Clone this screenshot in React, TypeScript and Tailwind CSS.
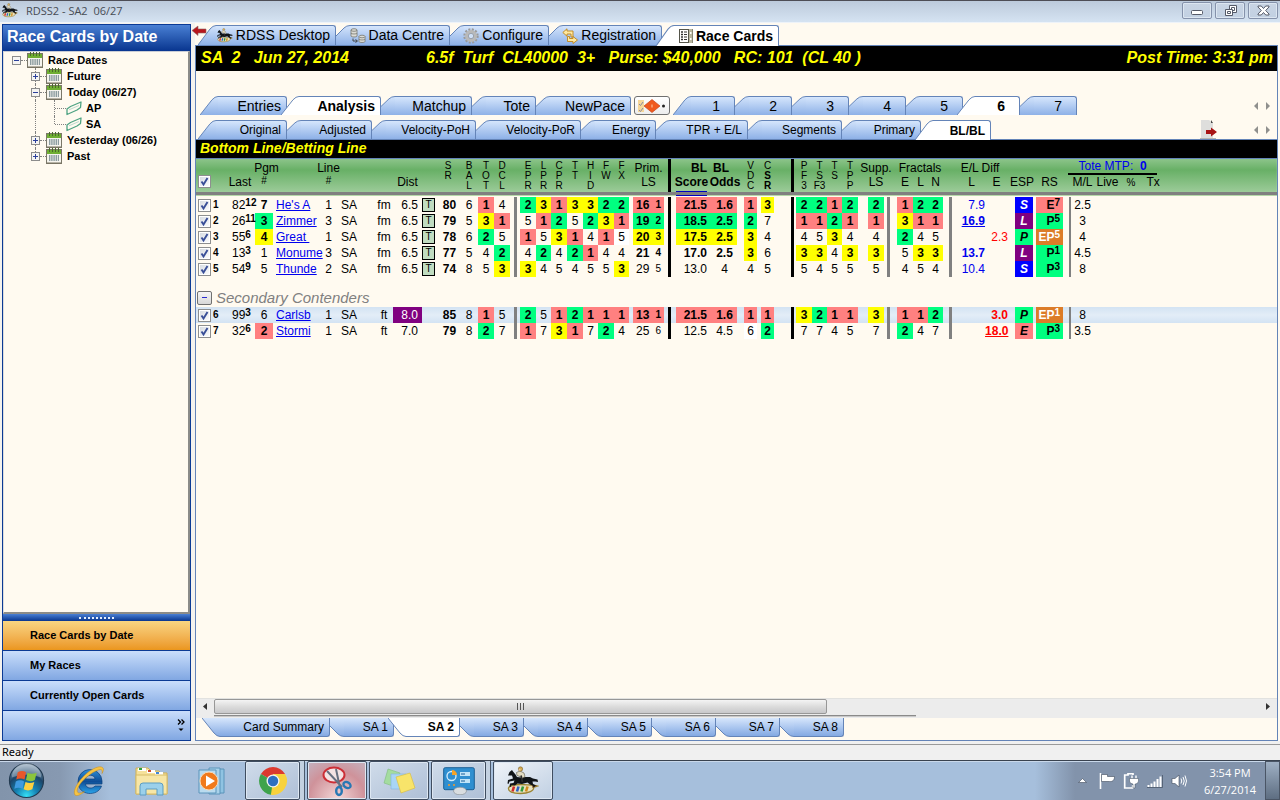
import React from "react";

type Tone = "r" | "g" | "y" | "w" | "";

const TONES: Record<Tone, string> = {
  r: "bg-[#ff8080] font-bold",
  g: "bg-[#00ff80] font-bold",
  y: "bg-[#ffff00] font-bold",
  w: "bg-white",
  "": "",
};

/* ---------- icons ---------- */

function HorseIcon({ className }: { className: string }) {
  return (
    <svg viewBox="0 0 32 30" className={className} aria-hidden="true">
      <path d="M1.500 22c1-2.500 6-3.500 12-3.500 5 0 9 .5 12 .5l5 1-4 1.500c1 3-5 6-13 6S1 25.500 1.500 22z" fill="#e9e2c0" stroke="#9a8434" strokeWidth="1.300" />
      <path d="M25 19l5.500.5-5 2.500z" fill="#8a5a20" />
      <path d="M7 20.500l-1.500 5" stroke="#d22a2a" strokeWidth="2.600" />
      <path d="M11.500 20.500l-1.500 5" stroke="#2d62c4" strokeWidth="2.600" />
      <path d="M16 20.500l-1.500 5" stroke="#2f9a3c" strokeWidth="2.600" />
      <path d="M20.500 20.500l-1.500 5" stroke="#d08a1c" strokeWidth="2.600" />
      <path
        d="M1 9.500 L2.500 6 L5 4 L6 5.500 L8.500 8.500 L10 11 L14 11.500 L19 11 L23 11 L26 12.500 L30.500 13.500 L31 16 L28.500 15.500 L25.500 15.500 L26 18 L29 19.500 L26.500 21.500 L26 19.800 L23 18.500 L20.500 16.500 L15 18 L10.500 17.500 L8 19.500 L4.500 19 L4 21 L2.500 20.500 L3 17.500 L6.500 17 L7.500 14.500 L2.500 15.500 L1.500 18 L.5 17.500 L1 14 L6 12.500 L5 9.500 L3 9.500 Z"
        fill="#101418"
      />
      <path d="M10 9.500 L9.500 6.500 L13 5 L17 7 L18 10.500 L15 12.500 L13 10.500 Z" fill="#e2dcc4" stroke="#5b5747" strokeWidth=".6" />
      <path d="M14 9.500l1.500 6.500" stroke="#2b2b2b" strokeWidth="1.700" />
      <circle cx="13.500" cy="3" r="2.200" fill="#d3a94c" stroke="#6c5423" strokeWidth=".5" />
      <circle cx="12.600" cy="3.800" r="1" fill="#e9c7a0" />
    </svg>
  );
}

function CalendarIcon() {
  return (
    <svg viewBox="0 0 16 16" className="h-4 w-4 shrink-0" aria-hidden="true">
      <rect x=".5" y="1.500" width="15" height="14" fill="#f6f4ee" stroke="#7a7768" />
      <path d="M1 2h14v4H1z" fill="#6fae33" />
      <path d="M3.500 0v4M6.500 0v4M9.500 0v4M12.500 0v4" stroke="#4a6a2a" />
      <path d="M3 8h10M3 10h10M3 12h10" stroke="#6a7f86" strokeWidth="1.400" strokeDasharray="1.400 .8" />
      <path d="M1 15h14" stroke="#77705c" />
    </svg>
  );
}

function TrackIcon() {
  return (
    <svg viewBox="0 0 16 16" className="h-4 w-4 shrink-0" aria-hidden="true">
      <path
        d="M1 14.500 L1 9 L4.500 6.500 L15 2 L14.500 7.500 L11 10 Z"
        fill="none"
        stroke="#4fa383"
        strokeWidth="1.300"
        strokeLinejoin="round"
      />
      <path d="M3 9.800 L13 5.500" stroke="#bcd9cc" />
    </svg>
  );
}

function TreeBox({ open }: { open: boolean }) {
  return (
    <svg viewBox="0 0 9 9" className="h-[9px] w-[9px] shrink-0" aria-hidden="true">
      <rect x=".5" y=".5" width="8" height="8" fill="#f5f4f2" stroke="#8c8c8c" />
      <path d="M2 4.500h5" stroke="#2b3f9a" />
      {!open && <path d="M4.500 2v5" stroke="#2b3f9a" />}
    </svg>
  );
}

function DatabaseIcon() {
  return (
    <svg viewBox="0 0 16 16" className="h-4 w-4 shrink-0" aria-hidden="true">
      <g fill="#dcdcd6" stroke="#77776f" strokeWidth=".8">
        <path d="M1 2v6c0 1.300 6 1.300 6 0V2z" />
        <ellipse cx="4" cy="2" rx="3" ry="1.300" />
        <path d="M1 5c0 1.300 6 1.300 6 0" fill="none" />
        <path d="M9 8.500v5c0 1.300 6 1.300 6 0v-5z" />
        <ellipse cx="12" cy="8.500" rx="3" ry="1.300" />
        <path d="M9 11c0 1.300 6 1.300 6 0" fill="none" />
      </g>
      <path d="M3 10.500v2.500h4M5.500 11.500L7.500 13l-2 1.500" fill="none" stroke="#444" />
    </svg>
  );
}

function GearIcon() {
  return (
    <svg viewBox="0 0 16 16" className="h-4 w-4 shrink-0" aria-hidden="true">
      <circle cx="8" cy="8" r="6.500" fill="none" stroke="#9a9a9a" strokeWidth="2.400" strokeDasharray="2 1.400" />
      <circle cx="8" cy="8" r="4.500" fill="none" stroke="#b9b9b9" strokeWidth="3" />
      <circle cx="8" cy="8" r="2.700" fill="#cfe0f7" stroke="#8a8a8a" strokeWidth=".7" />
    </svg>
  );
}

function SwapIcon() {
  return (
    <svg viewBox="0 0 16 16" className="h-4 w-4 shrink-0" aria-hidden="true">
      <g fill="#ffe9a0" stroke="#c08418" strokeWidth=".9" strokeLinejoin="round">
        <path d="M.8 4.500 L5 .8 V3 H11 V9 H9 V6 H5 V8.200 Z" />
        <path d="M15.500 12 L11 8.500 V10.500 H7.500 V8.500 H5.500 V13.500 H11 V15.500 Z" />
      </g>
    </svg>
  );
}

function CardIcon() {
  return (
    <svg viewBox="0 0 14 14" className="h-[14px] w-[14px] shrink-0" aria-hidden="true">
      <rect x=".5" y=".5" width="13" height="13" fill="#fff" stroke="#55554a" />
      <path d="M9.500 0h4v14h-4z" fill="#b9b6a0" />
      <path d="M9.500 0v14" stroke="#55554a" />
      <path d="M2 3h2M2 5.500h2M2 8h2M2 10.500h2" stroke="#333" strokeWidth="1.300" />
      <path d="M5 3h3M5 5.500h3M5 8h3M5 10.500h3" stroke="#333" />
      <path d="M11 4h1.500M11 10h1.500" stroke="#fff" strokeWidth="2" />
    </svg>
  );
}

/* ---------- tabs ---------- */

type TabProps = {
  label: string;
  width: string;
  size: string;
  selected?: boolean;
  first?: boolean;
  pad?: string;
  icon?: React.ReactNode;
};

function TabSlant({ full, selected }: { full: boolean; selected: boolean }) {
  const id = React.useId();
  const shape = full ? "M0 20 L12 4 Q15 .5 18 .5" : "M0 11 L8 3 Q10.500 .5 14 .5";
  const close = full ? " V20 Z" : " V20 H0 Z";
  return (
    <svg
      viewBox={full ? "0 0 18 20" : "0 0 14 20"}
      preserveAspectRatio="none"
      className={full ? "h-full w-[18px] shrink-0" : "h-full w-[14px] shrink-0"}
      aria-hidden="true"
    >
      <linearGradient id={id} x1="0" y1="0" x2="0" y2="20" gradientUnits="userSpaceOnUse">
        <stop offset="0" stopColor={selected ? "#fff" : "#d6e6fc"} />
        <stop offset="1" stopColor={selected ? "#fff" : "#8eb1e7"} />
      </linearGradient>
      <path d={shape + close} fill={`url(#${id})`} />
      <path d={shape} fill="none" stroke="#6484b8" />
    </svg>
  );
}

function Tab({ label, width, size, selected = false, first = false, pad = "pr-[5px]", icon }: TabProps) {
  return (
    <button
      type="button"
      role="tab"
      aria-selected={selected}
      className={`flex h-full shrink-0 ${width} ${size} ${selected && !first ? "relative -ml-[6px]" : ""} ${selected ? "font-bold" : ""}`}
    >
      <TabSlant full={first || selected} selected={selected} />
      <span
        className={`flex h-full min-w-0 flex-1 items-center justify-end gap-[3px] whitespace-nowrap rounded-tr-[3px] border-t border-r border-[#6484b8] ${pad} ${
          selected ? "bg-white" : "bg-linear-to-b from-[#d6e6fc] to-[#8eb1e7]"
        }`}
      >
        {icon}
        {label}
      </span>
    </button>
  );
}

function BottomTab({ label, width, selected = false, first = false }: Omit<TabProps, "size">) {
  const id = React.useId();
  const full = first || selected;
  const shape = full ? "M0 0 L12 15 Q15 18.500 18 18.500" : "M0 8 L8 16 Q10.500 18.500 14 18.500";
  return (
    <button
      type="button"
      role="tab"
      aria-selected={selected}
      className={`flex h-[19px] shrink-0 text-[12px] ${width} ${selected ? "relative -ml-[6px] font-bold" : ""}`}
    >
      <svg
        viewBox={full ? "0 0 18 19" : "0 0 14 19"}
        preserveAspectRatio="none"
        className={full ? "h-full w-[18px] shrink-0" : "h-full w-[14px] shrink-0"}
        aria-hidden="true"
      >
        <linearGradient id={id} x1="0" y1="0" x2="0" y2="19" gradientUnits="userSpaceOnUse">
          <stop offset="0" stopColor={selected ? "#fff" : "#d6e6fc"} />
          <stop offset="1" stopColor={selected ? "#fff" : "#84a9e2"} />
        </linearGradient>
        <path d={shape + (full ? " V0 Z" : " V0 H0 Z")} fill={`url(#${id})`} />
        <path d={shape} fill="none" stroke="#6484b8" />
      </svg>
      <span
        className={`flex h-full min-w-0 flex-1 items-center justify-end whitespace-nowrap rounded-br-[3px] border-r border-b border-[#6484b8] pr-[5px] ${
          selected ? "bg-white" : "bg-linear-to-b from-[#d6e6fc] to-[#84a9e2]"
        }`}
      >
        {label}
      </span>
    </button>
  );
}

function ScrollArrows() {
  return (
    <div className="ml-auto flex items-center gap-2 self-center pr-[7px]">
      <button type="button" aria-label="Scroll tabs left">
        <svg viewBox="0 0 4 8" className="h-2 w-1"><path d="M4 0v8L0 4z" fill="#8f8f8d" /></svg>
      </button>
      <button type="button" aria-label="Scroll tabs right">
        <svg viewBox="0 0 4 8" className="h-2 w-1"><path d="M0 0v8l4-4z" fill="#8f8f8d" /></svg>
      </button>
    </div>
  );
}

/* ---------- title bar ---------- */

function WindowButton({ label, children }: { label: string; children: React.ReactNode }) {
  return (
    <button
      type="button"
      aria-label={label}
      className="flex h-[17px] w-[30px] items-center justify-center rounded-[2px] border border-[#8592ab] bg-linear-to-b from-[#c9d5e4] to-[#c2d0e2] shadow-[inset_0_0_0_1px_#dce6f1]"
    >
      {children}
    </button>
  );
}

function TitleBar() {
  return (
    <header className="flex h-[23px] items-start border-t border-b border-t-[#4d4d55] border-b-[#eef3f9] bg-linear-to-b from-[#bccadb] to-[#d5e3f2] pr-[2px] pl-[2px]">
      <HorseIcon className="mt-[2px] h-[15px] w-4" />
      <h1 className="ml-2 font-['Open_Sans','Noto_Sans',sans-serif] text-[11px] leading-[19px] whitespace-pre text-[#474c54]">
        RDSS2 - SA2{"  "}06/27
      </h1>
      <div className="mt-px ml-auto flex gap-[3px]">
        <WindowButton label="Minimize">
          <svg viewBox="0 0 12 6" className="mt-[5px] h-[6px] w-3"><rect x=".5" y=".5" width="11" height="4" rx="1" fill="#fff" stroke="#555a68" /></svg>
        </WindowButton>
        <WindowButton label="Restore">
          <svg viewBox="0 0 13 12" className="h-3 w-[13px]" fill="#fff" stroke="#555a68">
            <path d="M5.500.5h7v7h-7z" /><path d="M7.500 2.500h3v3h-3z" /><path d="M1.500 4.500h7v6h-7z" /><path d="M3.500 6.500h3v2h-3z" />
          </svg>
        </WindowButton>
        <WindowButton label="Close">
          <svg viewBox="0 0 13 11" className="h-[11px] w-[13px]">
            <path d="M1 1h3.300l2.200 2.500L8.700 1H12v1L8.700 5.500 12 9v1H8.700L6.500 7.500 4.300 10H1V9l3.300-3.500L1 2z" fill="#fff" stroke="#555a68" />
          </svg>
        </WindowButton>
      </div>
    </header>
  );
}

/* ---------- sidebar ---------- */

function TreeRow({ label, open, top = false, last = false }: { label: string; open: boolean; top?: boolean; last?: boolean }) {
  return (
    <li className={`flex h-4 items-center ${top ? "pl-2" : "pl-[27px]"}`}>
      <button type="button" aria-label={`Toggle ${label}`} className="flex h-4 flex-col items-center">
        <span className={`flex-1 border-l border-dotted ${top ? "border-transparent" : "border-[#808080]"}`} />
        <TreeBox open={open} />
        <span className={`flex-1 border-l border-dotted ${top || last ? "border-transparent" : "border-[#808080]"}`} />
      </button>
      <span className="w-[6px] border-t border-dotted border-[#808080]" />
      <CalendarIcon />
      <span className="pl-[5px]">{label}</span>
    </li>
  );
}

function TrackRow({ label, last = false }: { label: string; last?: boolean }) {
  return (
    <li className="flex h-4 items-center pl-[31px]">
      <span className="h-4 border-l border-dotted border-[#808080]" />
      <span className={`ml-[18px] border-l border-dotted border-[#808080] ${last ? "h-2 self-start" : "h-4"}`} />
      <span className="w-[11px] border-t border-dotted border-[#808080]" />
      <TrackIcon />
      <span className="pl-1">{label}</span>
    </li>
  );
}

function Sidebar() {
  return (
    <aside className="ml-[2px] flex w-[189px] shrink-0 flex-col border border-[#0b3a94] text-[11px] font-bold">
      <h2 className="flex h-[26px] shrink-0 items-center bg-linear-to-b from-[#4a80d4] to-[#08358f] pb-[2px] pl-1 text-[16px] text-white">
        Race Cards by Date
      </h2>
      <nav aria-label="Race dates" className="flex-1 border-t border-r-2 border-b-2 border-l border-t-[#c9cdd6] border-r-[#8b8b88] border-b-[#8b8b88] border-l-[#dcdcdc] bg-[#fffaf0]">
        <ul>
          <TreeRow top label="Race Dates" open />
          <TreeRow label="Future" open={false} />
          <TreeRow label="Today (06/27)" open />
          <TrackRow label="AP" />
          <TrackRow label="SA" last />
          <TreeRow label="Yesterday (06/26)" open={false} />
          <TreeRow label="Past" open={false} last />
        </ul>
      </nav>
      <div className="flex h-[7px] shrink-0 items-center justify-center bg-linear-to-b from-[#4a80d4] to-[#08358f]">
        <span className="w-[35px] border-t-2 border-dotted border-[#e6eefb]" />
      </div>
      <button type="button" className="h-[30px] border-b border-[#0b3a94] bg-linear-to-b from-[#f8d581] to-[#eb961b] pl-[27px] text-left">
        Race Cards by Date
      </button>
      <button type="button" className="h-[30px] border-b border-[#0b3a94] bg-linear-to-b from-[#cadefb] to-[#81a7e2] pl-[27px] text-left">
        My Races
      </button>
      <button type="button" className="h-[30px] border-b border-[#0b3a94] bg-linear-to-b from-[#cadefb] to-[#81a7e2] pl-[27px] text-left">
        Currently Open Cards
      </button>
      <div className="flex h-[29px] items-center justify-end bg-linear-to-b from-[#cadefb] to-[#81a7e2] pr-[5px]">
        <button type="button" aria-label="Configure buttons">
          <svg viewBox="0 0 8 13" className="h-[13px] w-2">
            <path d="M1 .5L3.500 3 1 5.500M4.500.5L7 3 4.500 5.500" fill="none" stroke="#000" strokeWidth="1.300" />
            <path d="M1.500 9.500h5L4 12z" />
          </svg>
        </button>
      </div>
    </aside>
  );
}

/* ---------- analysis table ---------- */

const COLUMNS = [
  "w-[16px]", "w-[16px]", "w-[27px]", "w-[18px]", "w-[48px]", "w-[15px]", "w-[39px]", "w-[18px]", "w-[29px]", "w-[14px]",
  "w-[24px]", "w-[18px]", "w-[16px]", "w-[16px]", "w-[10px]",
  "w-[16px]", "w-[15px]", "w-[16px]", "w-[16px]", "w-[15px]", "w-[16px]", "w-[15px]", "w-[4px]",
  "w-[31px]", "w-[12px]", "w-[31px]", "w-[30px]", "w-[7px]", "w-[13px]", "w-[4px]", "w-[13px]", "w-[22px]",
  "w-[16px]", "w-[15px]", "w-[15px]", "w-[16px]", "w-[10px]", "w-[16px]", "w-[13px]",
  "w-[16px]", "w-[15px]", "w-[15px]", "w-[9px]",
  "w-[33px]", "w-[23px]", "w-[7px]", "w-[18px]", "w-[3px]", "w-[27px]", "w-[8px]",
  "w-[23px]", "w-[27px]", "w-[20px]", "w-[24px]", "w-auto",
];

type Runner = {
  n: number;
  last: [string, string];
  pgm: string;
  name: string;
  line: string;
  surface: string;
  dist: string;
  sr: string;
  bal: string;
  totals: string[];
  pace: string[];
  prim: [string, string, Tone];
  score: [string, string, Tone];
  scoreBold: boolean;
  vdc: string;
  csr: string;
  tote: string[];
  supp: string;
  fractals: string[];
  late?: string;
  early?: string;
  diffStyle: string;
  esp: [string, string];
  rs: [string, string, string];
  ml: string;
  highlight?: boolean;
};

const S = "bg-[#0000ff] text-white";
const L = "bg-[#800080] text-white";
const P = "bg-[#00ff80]";
const E = "bg-[#ff8080]";
const EP = "bg-[#dc7c28] text-white";

const CONTENDERS: Runner[] = [
  { n: 1, last: ["82", "12"], pgm: "7b", name: "He's A", line: "1", surface: "fm", dist: "6.5", sr: "80", bal: "6", totals: ["1r", "4"], pace: ["2g", "3y", "1r", "3y", "3y", "2g", "2g"], prim: ["16", "1", "r"], score: ["21.5", "1.6", "r"], scoreBold: true, vdc: "1r", csr: "3y", tote: ["2g", "2g", "1r", "2g"], supp: "2g", fractals: ["1r", "2g", "2g"], late: "7.9", diffStyle: "", esp: ["S", S], rs: ["E", "7", E], ml: "2.5" },
  { n: 2, last: ["26", "11"], pgm: "3g", name: "Zimmer", line: "3", surface: "fm", dist: "6.5", sr: "79", bal: "5", totals: ["3y", "1r"], pace: ["5", "1r", "2g", "5", "2g", "3y", "1r"], prim: ["19", "2", "g"], score: ["18.5", "2.5", "g"], scoreBold: true, vdc: "2g", csr: "7", tote: ["1r", "1r", "2g", "1r"], supp: "1r", fractals: ["3y", "1r", "1r"], late: "16.9", diffStyle: "font-bold underline", esp: ["L", L], rs: ["P", "5", P], ml: "3" },
  { n: 3, last: ["55", "6"], pgm: "4y", name: "Great ", line: "1", surface: "fm", dist: "6.5", sr: "78", bal: "6", totals: ["2g", "5"], pace: ["1r", "5", "3y", "1r", "4", "1r", "5w"], prim: ["20", "3", "y"], score: ["17.5", "2.5", "y"], scoreBold: true, vdc: "3y", csr: "4", tote: ["4", "5", "3y", "4"], supp: "4", fractals: ["2g", "4", "5"], early: "2.3", diffStyle: "", esp: ["P", P], rs: ["EP", "5", EP], ml: "4" },
  { n: 4, last: ["13", "3"], pgm: "1", name: "Monume", line: "3", surface: "fm", dist: "6.5", sr: "77", bal: "5", totals: ["4", "2g"], pace: ["4", "2g", "4", "2g", "1r", "4", "4"], prim: ["21", "4", ""], score: ["17.0", "2.5", ""], scoreBold: true, vdc: "3y", csr: "6", tote: ["3y", "3y", "4", "3y"], supp: "3y", fractals: ["5", "3y", "3y"], late: "13.7", diffStyle: "font-bold", esp: ["L", L], rs: ["P", "1", P], ml: "4.5" },
  { n: 5, last: ["54", "9"], pgm: "5", name: "Thunde", line: "2", surface: "fm", dist: "6.5", sr: "74", bal: "8", totals: ["5", "3y"], pace: ["3y", "4", "5", "4", "5", "5", "3y"], prim: ["29", "5", ""], score: ["13.0", "4", ""], scoreBold: false, vdc: "4", csr: "5", tote: ["5", "4", "5", "5"], supp: "5", fractals: ["4", "5", "4"], late: "10.4", diffStyle: "", esp: ["S", S], rs: ["P", "3", P], ml: "8" },
];

const SECONDARY: Runner[] = [
  { n: 6, last: ["99", "3"], pgm: "6", name: "Carlsb", line: "1", surface: "ft", dist: "8.0", sr: "85", bal: "8", totals: ["1r", "5"], pace: ["2g", "5", "1r", "2g", "1r", "1r", "1r"], prim: ["13", "1", "r"], score: ["21.5", "1.6", "r"], scoreBold: true, vdc: "1r", csr: "1r", tote: ["3y", "2g", "1r", "1r"], supp: "3y", fractals: ["1r", "1r", "2g"], early: "3.0", diffStyle: "font-bold", esp: ["P", P], rs: ["EP", "1", EP], ml: "8", highlight: true },
  { n: 7, last: ["32", "6"], pgm: "2r", name: "Stormi", line: "1", surface: "ft", dist: "7.0", sr: "79", bal: "8", totals: ["2g", "7"], pace: ["1r", "7", "3y", "1r", "7", "2g", "4"], prim: ["25", "6", ""], score: ["12.5", "4.5", ""], scoreBold: false, vdc: "6w", csr: "2g", tote: ["7", "7", "4", "5"], supp: "7", fractals: ["2g", "4", "7"], early: "18.0", diffStyle: "font-bold underline", esp: ["E", E], rs: ["P", "3", P], ml: "3.5" },
];

function CheckBox({ label }: { label: string }) {
  return (
    <span className="relative block h-[13px] w-[13px]">
      <input
        type="checkbox"
        defaultChecked
        aria-label={label}
        className="peer block h-[13px] w-[13px] appearance-none border border-[#8e8f8f] bg-linear-to-br from-[#d4d9e0] to-white shadow-[inset_0_0_0_1px_#fff]"
      />
      <svg viewBox="0 0 13 13" className="pointer-events-none absolute top-0 left-0 hidden h-[13px] w-[13px] peer-checked:block">
        <path d="M3.500 6.500L5.500 9.500L9.500 3" fill="none" stroke="#3a4f98" strokeWidth="1.900" />
      </svg>
    </span>
  );
}

function Rank({ code }: { code: string }) {
  const tone = code.slice(1);
  return <td className={`text-center ${tone === "b" ? "font-bold" : TONES[tone as Tone]}`}>{code[0]}</td>;
}

function Bar({ offset, color, width = "w-[3px]" }: { offset: string; color: string; width?: string }) {
  return (
    <td>
      <div className={`h-4 ${width} ${offset} ${color}`} />
    </td>
  );
}

function RunnerRow({ r }: { r: Runner }) {
  const primBold = r.prim[2] || r.n === 4 ? "font-bold" : "";
  return (
    <tr className={r.highlight ? "h-4 bg-linear-to-b from-[#d3e3f3] via-[#e3edf7] to-[#d3e3f3]" : "h-4"}>
      <td className="pl-[2px]"><CheckBox label={`Select runner ${r.n}`} /></td>
      <td className="pl-px text-[10px] font-bold">{r.n}</td>
      <td className="pl-1 whitespace-nowrap">
        <div className="flex h-4 leading-4">
          {r.last[0]}
          <span className="text-[10px] leading-3 font-bold">{r.last[1]}</span>
        </div>
      </td>
      <Rank code={r.pgm} />
      <td className="pl-[3px] whitespace-pre">
        <a href={`#runner-${r.n}`} className="text-[#0000ee] underline">{r.name}</a>
      </td>
      <td className="text-center">{r.line}</td>
      <td className="pl-[5px]">SA</td>
      <td className="text-center">{r.surface}</td>
      <td className={`pr-1 text-right ${r.highlight ? "bg-[#800080] text-white" : ""}`}>{r.dist}</td>
      <td>
        {r.surface === "fm" && (
          <div className="h-[14px] w-[13px] border border-black bg-[#c0dcc0] text-center text-[10px] leading-3">T</div>
        )}
      </td>
      <td className="pl-[3px] text-center font-bold">{r.sr}</td>
      <td className="text-center">{r.bal}</td>
      {r.totals.map((c, i) => <Rank key={i} code={c} />)}
      <Bar offset="ml-1" color="bg-[#808080]" />
      {r.pace.map((c, i) => <Rank key={i} code={c} />)}
      <td />
      <td className={`${TONES[r.prim[2]]} ${primBold}`}>
        <div className="flex items-center justify-between pr-[3px] pl-[3px]">
          {r.prim[0]}
          <span className="text-[10px]">{r.prim[1]}</span>
        </div>
      </td>
      <Bar offset="ml-1" color="bg-black" />
      <td className={`text-right ${TONES[r.score[2]]} ${r.scoreBold ? "font-bold" : ""}`}>{r.score[0]}</td>
      <td className={`pl-[5px] text-center ${TONES[r.score[2]]} ${r.scoreBold ? "font-bold" : ""}`}>{r.score[1]}</td>
      <td />
      <Rank code={r.vdc} />
      <td />
      <Rank code={r.csr} />
      <Bar offset="ml-[17px]" color="bg-black" />
      {r.tote.map((c, i) => <Rank key={i} code={c} />)}
      <td />
      <Rank code={r.supp} />
      <Bar offset="ml-[3px]" color="bg-[#808080]" />
      {r.fractals.map((c, i) => <Rank key={i} code={c} />)}
      <Bar offset="ml-[6px]" color="bg-[#808080]" />
      <td className={`text-right text-[#0000ee] ${r.diffStyle}`}>{r.late}</td>
      <td className={`text-right text-[#ff0000] ${r.diffStyle}`}>{r.early}</td>
      <td />
      <td className={`text-center font-bold italic ${r.esp[1]}`}>{r.esp[0]}</td>
      <td />
      <td className={r.rs[2]}>
        <div className="flex h-4 justify-end pr-[3px] font-bold">
          {r.rs[0]}
          <span className="text-[10px] leading-3">{r.rs[1]}</span>
        </div>
      </td>
      <Bar offset="ml-[6px]" color="bg-[#808080]" width="w-[2px]" />
      <td className="text-center">{r.ml}</td>
      <td colSpan={4} />
    </tr>
  );
}

function VerticalHead({ letters, boldFrom = 9 }: { letters: string[]; boldFrom?: number }) {
  return (
    <th rowSpan={2} scope="col" className="pt-[2px] align-top text-[10px] leading-[10px] font-normal">
      {letters.map((c, i) => (
        <span key={i} className={i >= boldFrom ? "block font-bold" : "block"}>{c}</span>
      ))}
    </th>
  );
}

function Head({ text = "", span = 1, bold = false, className = "" }: { text?: string; span?: number; bold?: boolean; className?: string }) {
  return (
    <th colSpan={span} scope="col" className={`${bold ? "font-bold" : "font-normal"} ${className}`}>
      <div className="flex justify-center whitespace-nowrap"><span>{text}</span></div>
    </th>
  );
}

function Blank() {
  return <th rowSpan={2} />;
}

function BlackBar({ offset }: { offset: string }) {
  return (
    <th rowSpan={2}>
      <div className={`h-[33px] w-[3px] bg-black ${offset}`} />
    </th>
  );
}

function AnalysisTable() {
  const [open, setOpen] = React.useState(true);
  return (
    <table className="w-full table-fixed border-separate border-spacing-0 text-[12px] leading-4 [&_td]:py-0 [&_th]:pb-0">
      <colgroup>
        {COLUMNS.map((w, i) => <col key={i} className={w} />)}
      </colgroup>
      <thead className="bg-[linear-gradient(to_bottom,#8cc48a_0px,#68b066_11px,#9ccb99_33px)]">
        <tr className="h-[17px]">
          <th rowSpan={2} className="pt-[16px] pl-[2px] align-top"><CheckBox label="Select all runners" /></th>
          <Blank />
          <Head />
          <Head text="Pgm" className="pl-[5px]" />
          <Blank />
          <Head text="Line" />
          <Blank />
          <Blank />
          <Head />
          <Blank />
          <VerticalHead letters={["S", "R"]} />
          <VerticalHead letters={["B", "A", "L"]} />
          <VerticalHead letters={["T", "O", "T"]} />
          <VerticalHead letters={["D", "C", "L"]} />
          <Blank />
          <VerticalHead letters={["E", "P", "R"]} />
          <VerticalHead letters={["L", "P", "R"]} />
          <VerticalHead letters={["C", "P", "R"]} />
          <VerticalHead letters={["T", "T"]} />
          <VerticalHead letters={["H", "I", "D"]} />
          <VerticalHead letters={["F", "W"]} />
          <VerticalHead letters={["F", "X"]} />
          <Blank />
          <Head text="Prim." />
          <BlackBar offset="ml-1" />
          <th scope="col" className="text-right">BL</th>
          <th scope="col" className="pl-[6px] text-left">BL</th>
          <Blank />
          <VerticalHead letters={["V", "D", "C"]} />
          <Blank />
          <VerticalHead letters={["C", "S", "R"]} boldFrom={1} />
          <BlackBar offset="ml-[17px]" />
          <VerticalHead letters={["P", "F", "3"]} />
          <VerticalHead letters={["T", "S", "F3"]} />
          <VerticalHead letters={["T", "S"]} />
          <VerticalHead letters={["T", "P", "P"]} />
          <Blank />
          <Head text="Supp." />
          <Blank />
          <Head text="Fractals" span={3} />
          <Blank />
          <Head text="E/L Diff" span={2} />
          <Blank />
          <Head />
          <Blank />
          <Head />
          <Blank />
          <th colSpan={4} className="align-top font-normal text-[#0000ee]">
            <div className="mr-2 -ml-[3px] h-4 border-b-2 border-black text-center leading-[15px] whitespace-pre">
              Tote MTP:{"  "}<b>0</b>
            </div>
          </th>
          <Blank />
        </tr>
        <tr className="h-4 align-top leading-[13px] [&>th]:align-top">
          <Head text="Last" className="pr-[3px]" />
          <Head text="#" className="text-[10px] leading-[10px]" />
          <Head text="#" className="text-[10px] leading-[10px]" />
          <Head text="Dist" />
          <Head text="LS" />
          <Head text="Score" bold className="border-b border-[#0000c0]" />
          <Head text="Odds" bold className="pl-[6px]" />
          <Head text="LS" />
          <Head text="E" />
          <Head text="L" />
          <Head text="N" />
          <Head text="L" className="pl-[6px]" />
          <Head text="E" />
          <Head text="ESP" className="pr-[4px]" />
          <Head text="RS" />
          <Head text="M/L" />
          <Head text="Live" />
          <Head text="%" className="text-[10px]" />
          <Head text="Tx" />
        </tr>
        <tr className="h-[3px] bg-[#808080]">
          <td colSpan={55} />
        </tr>
      </thead>
      <tbody>
        <tr className="h-[2px]">
          <td colSpan={25} className="border-t border-[#b5d8a8]" />
          <td className="border-t border-[#0000c0]" />
          <td colSpan={29} className="border-t border-[#b5d8a8]" />
        </tr>
        {CONTENDERS.map((r) => <RunnerRow key={r.n} r={r} />)}
      </tbody>
      <tbody>
        <tr className="h-[30px]">
          <td colSpan={55} className="align-bottom">
            <div className="flex items-center gap-1 pb-px pl-px text-[15px] leading-[17px] text-[#808080] italic">
              <button
                type="button"
                aria-expanded={open}
                aria-label="Toggle secondary contenders"
                onClick={() => setOpen(!open)}
                className="flex h-[14px] w-[15px] items-center justify-center rounded-[2px] border border-[#707070] bg-linear-to-b from-[#f6f6f6] to-[#d8d8d8]"
              >
                <span className="h-px w-[5px] bg-[#2a2ad0]" />
              </button>
              Secondary Contenders
            </div>
          </td>
        </tr>
        {open && SECONDARY.map((r) => <RunnerRow key={r.n} r={r} />)}
      </tbody>
    </table>
  );
}

/* ---------- workspace ---------- */

function Workspace() {
  return (
    <main className="relative ml-1 flex min-w-0 flex-1 flex-col bg-[#fffaf0]">
      <svg viewBox="0 0 15 12" className="absolute top-[2px] -left-[3px] h-3 w-[15px]" aria-hidden="true">
        <path d="M0 5.500L6 1V4H14V8H6V10.500Z" fill="#b8161c" stroke="#8a6a6a" strokeWidth=".6" />
      </svg>
      <div role="tablist" aria-label="Modules" className="mt-[2px] mr-[2px] flex h-[21px] shrink-0 border-b border-[#6484b8] pl-[3px]">
        <Tab first label="RDSS Desktop" width="w-[138px]" size="text-[14px]" icon={<HorseIcon className="h-[15px] w-4" />} />
        <Tab label="Data Centre" width="w-[114px]" size="text-[14px]" icon={<DatabaseIcon />} />
        <Tab label="Configure" width="w-[99px]" size="text-[14px]" icon={<GearIcon />} />
        <Tab label="Registration" width="w-[113px]" size="text-[14px]" icon={<SwapIcon />} />
        <div className="-mb-px flex"><Tab selected label="Race Cards" width="w-[123px]" size="text-[14px]" icon={<CardIcon />} /></div>
      </div>
      <section className="mr-[2px] flex min-w-0 flex-1 flex-col border-r border-b border-l border-[#6484b8]">
        <div className="flex h-[25px] shrink-0 items-center bg-black pr-1 pb-px pl-[5px] text-[16px] font-bold whitespace-pre text-[#ffff00] italic">
          <span className="w-[225px] shrink-0">{"SA  2   Jun 27, 2014"}</span>
          <span className="flex-1">{"6.5f  Turf  CL40000  3+   Purse: $40,000   RC: 101  (CL 40 )"}</span>
          <span>Post Time: 3:31 pm</span>
        </div>

        <div className="mt-[25px] flex h-[19px] shrink-0 pl-1">
          <div role="tablist" aria-label="Views" className="flex">
            <Tab first label="Entries" width="w-[87px]" size="text-[14px]" />
            <Tab selected label="Analysis" width="w-[100px]" size="text-[14px]" />
            <Tab label="Matchup" width="w-[91px]" size="text-[14px]" />
            <Tab label="Tote" width="w-[64px]" size="text-[14px]" />
            <Tab label="NewPace" width="w-[95px]" size="text-[14px]" />
          </div>
          <button type="button" aria-label="Run selection" className="mx-[3px] flex w-9 items-center justify-center rounded-[3px] border border-[#707070] bg-linear-to-b from-white to-[#ededed]">
            <svg viewBox="0 0 30 14" className="h-[14px] w-[30px]">
              <path d="M1 1h6v12H1z" fill="#f6d79a" />
              <path d="M2 5l1.500 1.500L6 3M2 11l1.500 1.500L6 9" fill="none" stroke="#8a8aa0" />
              <path d="M7 7L15 .5 23 7l-8 6.500z" fill="#f05a1e" stroke="#c8431a" strokeWidth=".7" />
              <path d="M15 5.500v3" stroke="#fbd0b0" />
              <circle cx="26.500" cy="7" r="1.500" fill="#222" />
            </svg>
          </button>
          <div role="tablist" aria-label="Races" className="flex">
            <Tab first label="1" width="w-[62px]" size="text-[14px]" pad="pr-[14px]" />
            <Tab label="2" width="w-[57px]" size="text-[14px]" pad="pr-[14px]" />
            <Tab label="3" width="w-[57px]" size="text-[14px]" pad="pr-[14px]" />
            <Tab label="4" width="w-[57px]" size="text-[14px]" pad="pr-[14px]" />
            <Tab label="5" width="w-[57px]" size="text-[14px]" pad="pr-[14px]" />
            <Tab selected label="6" width="w-[63px]" size="text-[14px]" pad="pr-[14px]" />
            <Tab label="7" width="w-[57px]" size="text-[14px]" pad="pr-[14px]" />
          </div>
          <ScrollArrows />
        </div>

        <div className="mt-[5px] flex h-5 shrink-0 border-b border-[#6484b8] pl-[2px]">
          <div role="tablist" aria-label="Analysis pages" className="flex">
            <Tab first label="Original" width="w-[89px]" size="text-[12px]" />
            <Tab label="Adjusted" width="w-[85px]" size="text-[12px]" />
            <Tab label="Velocity-PoH" width="w-[104px]" size="text-[12px]" />
            <Tab label="Velocity-PoR" width="w-[105px]" size="text-[12px]" />
            <Tab label="Energy" width="w-[75px]" size="text-[12px]" />
            <Tab label="TPR + E/L" width="w-[92px]" size="text-[12px]" />
            <Tab label="Segments" width="w-[94px]" size="text-[12px]" />
            <Tab label="Primary" width="w-[79px]" size="text-[12px]" />
            <div className="-mb-px flex"><Tab selected label="BL/BL" width="w-[76px]" size="text-[12px]" /></div>
          </div>
          <button type="button" aria-label="Export page" className="ml-auto">
            <svg viewBox="0 0 17 19" className="h-[19px] w-[17px]">
              <path d="M1 0h8l4 3v15H1z" fill="#dededc" />
              <path d="M11 0l2 3h-2z" fill="#444" />
              <path d="M0 18.500h16" stroke="#b5b5b0" />
              <path d="M6 10h5V7.500l6 4.500-6 4.500V14H6z" fill="#a81414" />
            </svg>
          </button>
          <div className="ml-[37px] flex"><ScrollArrows /></div>
        </div>

        <h2 className="h-[18px] shrink-0 bg-black pl-1 text-[14px] leading-[17px] font-bold text-[#ffff00] italic">
          Bottom Line/Betting Line
        </h2>
        <div className="min-w-0 flex-1 border-t border-[#6484b8]">
          <AnalysisTable />
        </div>

        <div className="flex h-4 shrink-0 items-stretch border-t border-[#e2e2e0] bg-[#ececec]">
          <button type="button" aria-label="Scroll left" className="flex w-[18px] items-center justify-center">
            <svg viewBox="0 0 4 7" className="h-[7px] w-1"><path d="M4 0v7L0 3.500z" fill="#333" /></svg>
          </button>
          <div className="flex flex-1">
            <div className="flex w-[58.7%] items-center justify-center gap-[2px] rounded-[2px] border border-[#979797] bg-linear-to-b from-[#f4f4f4] via-[#dcdcdc] to-[#c8c8ca]">
              <span className="h-[7px] w-px bg-[#555]" />
              <span className="h-[7px] w-px bg-[#555]" />
              <span className="h-[7px] w-px bg-[#555]" />
            </div>
          </div>
          <button type="button" aria-label="Scroll right" className="flex w-[18px] items-center justify-center">
            <svg viewBox="0 0 4 7" className="h-[7px] w-1"><path d="M0 0v7l4-3.500z" fill="#333" /></svg>
          </button>
        </div>
        <div className="h-1 shrink-0 bg-[#ececec] pt-px pl-[18px]">
          <div className="h-[2px] w-[66%] border-t border-[#8a8a8a] bg-[#c8c8c8]" />
        </div>
        <div role="tablist" aria-label="Card sheets" className="flex h-[22px] shrink-0 pl-[6px]">
          <BottomTab first label="Card Summary" width="w-[128px]" />
          <BottomTab label="SA 1" width="w-[64px]" />
          <BottomTab selected label="SA 2" width="w-[72px]" />
          <BottomTab label="SA 3" width="w-[64px]" />
          <BottomTab label="SA 4" width="w-[64px]" />
          <BottomTab label="SA 5" width="w-[64px]" />
          <BottomTab label="SA 6" width="w-[64px]" />
          <BottomTab label="SA 7" width="w-[64px]" />
          <BottomTab label="SA 8" width="w-[64px]" />
        </div>
      </section>
    </main>
  );
}

/* ---------- taskbar ---------- */

function TaskButton({ label, width, tone, stacked = false, children }: { label: string; width: string; tone: string; stacked?: boolean; children: React.ReactNode }) {
  return (
    <div className={`flex ${stacked ? "border-r border-[#4c5a6c] bg-[#c3d1e1] pr-1" : ""}`}>
      <button
        type="button"
        aria-label={label}
        className={`flex items-center justify-center rounded-[2px] border border-[#3f4d60] shadow-[inset_0_0_0_1px_#dde7f2] ${width} ${tone}`}
      >
        {children}
      </button>
    </div>
  );
}

function TaskBar() {
  return (
    <footer className="flex h-10 shrink-0 items-stretch border-t border-[#39424f] bg-[linear-gradient(to_right,#8294ab_0px,#8799b1_60px,#a6bfdc_110px,#a6bfdc_calc(100%-245px),#8293ab_calc(100%-205px),#8293ab_100%)] shadow-[inset_0_1px_0_#c9d8ea]">
      <button type="button" aria-label="Start" className="ml-[8px] flex items-center">
        <svg viewBox="0 0 38 38" className="h-[37px] w-[37px]">
          <defs>
            <radialGradient id="orb" cx=".5" cy=".95" r=".9">
              <stop offset="0" stopColor="#35e0f6" /><stop offset=".35" stopColor="#1583b4" /><stop offset=".7" stopColor="#1c4569" /><stop offset="1" stopColor="#8ba3b8" />
            </radialGradient>
          </defs>
          <circle cx="19" cy="19" r="17.500" fill="url(#orb)" stroke="#223a50" strokeWidth="1.200" />
          <path d="M4 16a15 15 0 0 1 30 0c-8-4-22-4-30 0z" fill="#fff" opacity=".3" />
          <path d="M10 10.500c3-1.800 6-1.600 8.500 0L17 18c-3-1.500-5.500-1.500-8.500 0z" fill="#e8572a" />
          <path d="M20 11c2.800 1.600 6 1.500 9.500 0L27.500 18.500c-3 1.700-6 1.500-9 0z" fill="#8bc53d" />
          <path d="M8 20c3-1.600 6-1.500 8.500 0L15 27.500c-3-1.600-5.500-1.500-8.500 0z" fill="#3f9be0" />
          <path d="M18 20.500c3 1.600 6 1.500 9 0L25 28c-3 1.600-6 1.500-9 0z" fill="#fcd040" />
        </svg>
      </button>
      <button type="button" aria-label="Internet Explorer" className="ml-[27px] flex items-center">
        <svg viewBox="0 0 34 32" className="h-8 w-[34px]">
          <defs>
            <linearGradient id="globe" x1="0" y1="0" x2="0" y2="1">
              <stop offset="0" stopColor="#2f8fd8" /><stop offset=".5" stopColor="#0f4d96" /><stop offset="1" stopColor="#2aa4ea" />
            </linearGradient>
          </defs>
          <path d="M6 17a12 12 0 0 1 24-1v3H13.500c.5 5 7.500 5 9.500 2h6.500C26 32 6 31 6 17zm7.500-3H23c-.5-5-8.500-5-9.500 0z" fill="url(#globe)" stroke="#0c3f7d" strokeWidth=".7" />
          <path d="M3 30C-1 24 14 5 26 2c5-1 7 1.500 4 6.500 1-4-1-5-5-3C14 10 3 23 5.500 27c1 2 4 1 7-.5C8.500 30 4.500 31.500 3 30z" fill="#f6c344" stroke="#c98c17" strokeWidth=".5" />
        </svg>
      </button>
      <button type="button" aria-label="File Explorer" className="ml-[28px] flex items-center">
        <svg viewBox="0 0 34 32" className="h-8 w-[34px]">
          <path d="M2 3h12l3 3h8l2 2h6v21H2z" fill="#f5e19a" stroke="#cfae55" />
          <path d="M4 3h8v3H4z" fill="#fff" /><path d="M5 3h3v2H5z" fill="#2ca03c" />
          <path d="M13 5h8v3h-8z" fill="#fff" /><path d="M14 5h3v2h-3z" fill="#cc4a2c" />
          <path d="M21 7h8v3h-8z" fill="#fff" /><path d="M22 7h3v2h-3z" fill="#3f86d8" />
          <path d="M2 10h31v19H2z" fill="#f7e6a6" stroke="#d6bb66" />
          <path d="M6 30v-9q0-3 3-3h17q3 0 3 3v9h-6v-6H12v6z" fill="#9bd0ea" stroke="#5c9dc2" />
        </svg>
      </button>
      <button type="button" aria-label="Media Player" className="ml-[29px] flex items-center">
        <svg viewBox="0 0 32 30" className="h-[30px] w-8">
          <path d="M16 3h11v24H16z" fill="#8fc3e2" stroke="#5a94ba" /><path d="M12 2h11v26H12z" fill="#a9d2ea" stroke="#5a94ba" />
          <path d="M2 4h17v23H2z" fill="#b9dbef" stroke="#5a94ba" />
          <circle cx="12" cy="15" r="9" fill="#f07a1c" stroke="#fbd9b3" />
          <path d="M9 9.500v11l9-5.500z" fill="#fff" />
        </svg>
      </button>
      <div className="ml-[16px] flex gap-[2px]">
        <TaskButton stacked label="Chrome" width="w-[55px]" tone="bg-linear-to-br from-[#d0dcea] to-[#aebfd6]">
          <svg viewBox="0 0 30 30" className="h-[30px] w-[30px]">
            <path d="M15 15L2.900 8A14 14 0 0 1 27.100 8z" fill="#dc3a2f" />
            <path d="M15 15L2.900 8a14 14 0 0 0 10 20.800L19 17z" fill="#3fa34c" />
            <path d="M15 15l-2.100 13.800A14 14 0 0 0 27.100 8H15z" fill="#f8d23c" />
            <circle cx="15" cy="15" r="6.500" fill="#f4f4f4" /><circle cx="15" cy="15" r="5.200" fill="#2f6fc0" />
          </svg>
        </TaskButton>
        <TaskButton label="Snipping Tool" width="w-[60px]" tone="bg-[radial-gradient(circle_at_50%_100%,#f3d7d7,#cf929a_60%,#c3b3c0)]">
          <svg viewBox="0 0 30 32" className="h-8 w-[30px]">
            <ellipse cx="12" cy="10" rx="10.500" ry="7.500" fill="#f4e3e3" stroke="#cc2f36" strokeWidth="2" />
            <path d="M5 6l15 16M14 4l4 19" stroke="#667080" strokeWidth="2" />
            <ellipse cx="17" cy="26" rx="2.800" ry="4" fill="none" stroke="#2878b4" strokeWidth="2.400" />
            <ellipse cx="25" cy="20" rx="3.800" ry="2.800" fill="none" stroke="#2878b4" strokeWidth="2.400" transform="rotate(35 25 20)" />
          </svg>
        </TaskButton>
        <TaskButton label="Sticky Notes" width="w-[60px]" tone="bg-linear-to-br from-[#d0dcea] to-[#aebfd6]">
          <svg viewBox="0 0 34 28" className="h-7 w-[34px]">
            <path d="M6 2l12 4-4 14-12-4z" fill="#a4dca0" stroke="#7fbc7c" strokeWidth=".6" />
            <path d="M9 7h15v15H9z" fill="#a9d5f5" stroke="#84b4dd" strokeWidth=".6" />
            <path d="M14 10l14-4 5 15-14 5z" fill="#f8e46a" stroke="#d6bb3c" strokeWidth=".6" />
          </svg>
        </TaskButton>
        <TaskButton stacked label="Control Panel" width="w-[55px]" tone="bg-linear-to-br from-[#d0dcea] to-[#aebfd6]">
          <svg viewBox="0 0 32 28" className="h-7 w-8">
            <rect x=".7" y=".7" width="30.600" height="22" rx="1.500" fill="#2f8fd0" stroke="#1c5f94" />
            <circle cx="8.500" cy="9" r="4.500" fill="none" stroke="#d8eefb" strokeWidth="1.300" /><path d="M9 8V3a5 5 0 0 1 5 5z" fill="#f5a328" />
            <path d="M17 5h10v4H17zM17 12h10v4H17z" fill="#bfe4f8" /><path d="M18 7h4M18 14h4" stroke="#1b5f98" />
            <circle cx="6" cy="18" r="1" fill="#f59a28" /><circle cx="11" cy="18" r="1" fill="#f59a28" />
            <ellipse cx="17" cy="24" rx="6.500" ry="3.800" fill="#d9dde0" stroke="#8b9298" strokeWidth=".7" />
          </svg>
        </TaskButton>
        <TaskButton label="RDSS2" width="w-[60px]" tone="bg-linear-to-br from-[#f0f4f9] to-[#bfcfe2]">
          <HorseIcon className="h-[30px] w-8" />
        </TaskButton>
      </div>
      <div className="ml-auto flex items-center">
        <svg viewBox="0 0 9 5" className="h-[5px] w-[9px]" aria-label="Show hidden icons"><path d="M.5 4.500L4.500.5l4 4z" fill="#fff" stroke="#3f4c5c" strokeWidth=".6" /></svg>
        <svg viewBox="0 0 16 16" className="ml-3 h-4 w-4" aria-label="Action Center">
          <path d="M1.500 0v16" stroke="#fff" strokeWidth="1.600" /><path d="M2.500 1.500h6v2h7v.5c0 3-2 5-5 4.500H2.500z" fill="#fff" stroke="#3f4c5c" strokeWidth=".6" />
        </svg>
        <svg viewBox="0 0 16 16" className="ml-2 h-4 w-4" aria-label="Power">
          <path d="M10 2V.7H5V2H1.700v13h8v-3" fill="none" stroke="#fff" strokeWidth="1.700" />
          <path d="M9 2.500v3M13 2.500v3" stroke="#fff" strokeWidth="1.400" /><path d="M6.500 5.500h9V8c0 2.500-3 3-3.500 3v4h-2v-4C9 11 6.500 10 6.500 8z" fill="#fff" stroke="#3f4c5c" strokeWidth=".5" />
        </svg>
        <svg viewBox="0 0 17 14" className="ml-2 h-[14px] w-[17px]" aria-label="Network">
          <path d="M1.500 11v2M4.500 9.500V13M7.500 7.500V13M10.500 5V13M13.500 2.500V13" stroke="#fff" strokeWidth="2" /><path d="M15.500 1v12.500H0" fill="none" stroke="#4b586a" strokeWidth=".8" />
        </svg>
        <svg viewBox="0 0 16 14" className="ml-[7px] h-[14px] w-4" aria-label="Volume">
          <path d="M1 4.500h3L8 1v12L4 9.500H1z" fill="#fff" stroke="#3f4c5c" strokeWidth=".6" /><path d="M10 4.500q1.500 2.500 0 5M12 3q2.500 4 0 8M14 1.500q3 5.500 0 11" fill="none" stroke="#fff" />
        </svg>
        <div className="mr-[7px] ml-[15px] w-14 text-center font-['Open_Sans','Noto_Sans',sans-serif] text-[11px] leading-[17px] whitespace-nowrap text-white">
          <div>3:54 PM</div>
          <div>6/27/2014</div>
        </div>
        <button type="button" aria-label="Show desktop" className="h-full w-[15px] border border-[#4a5565] bg-linear-to-b from-[#9fb0c4] to-[#5e6e82]" />
      </div>
    </footer>
  );
}

export default function App() {
  return (
    <div className="flex min-h-screen flex-col bg-[#f0f0f0] font-['Liberation_Sans',Arial,sans-serif] text-black">
      <TitleBar />
      <div className="flex flex-1 bg-[#f4f2ee] pt-px">
        <Sidebar />
        <div className="-mt-px flex min-w-0 flex-1"><Workspace /></div>
      </div>
      <div className="mt-[3px] h-4 shrink-0 border-t border-[#9a9a9a] pl-[2px] font-['Noto_Sans',sans-serif] text-[11px] leading-[14px]">
        Ready
      </div>
      <TaskBar />
    </div>
  );
}
